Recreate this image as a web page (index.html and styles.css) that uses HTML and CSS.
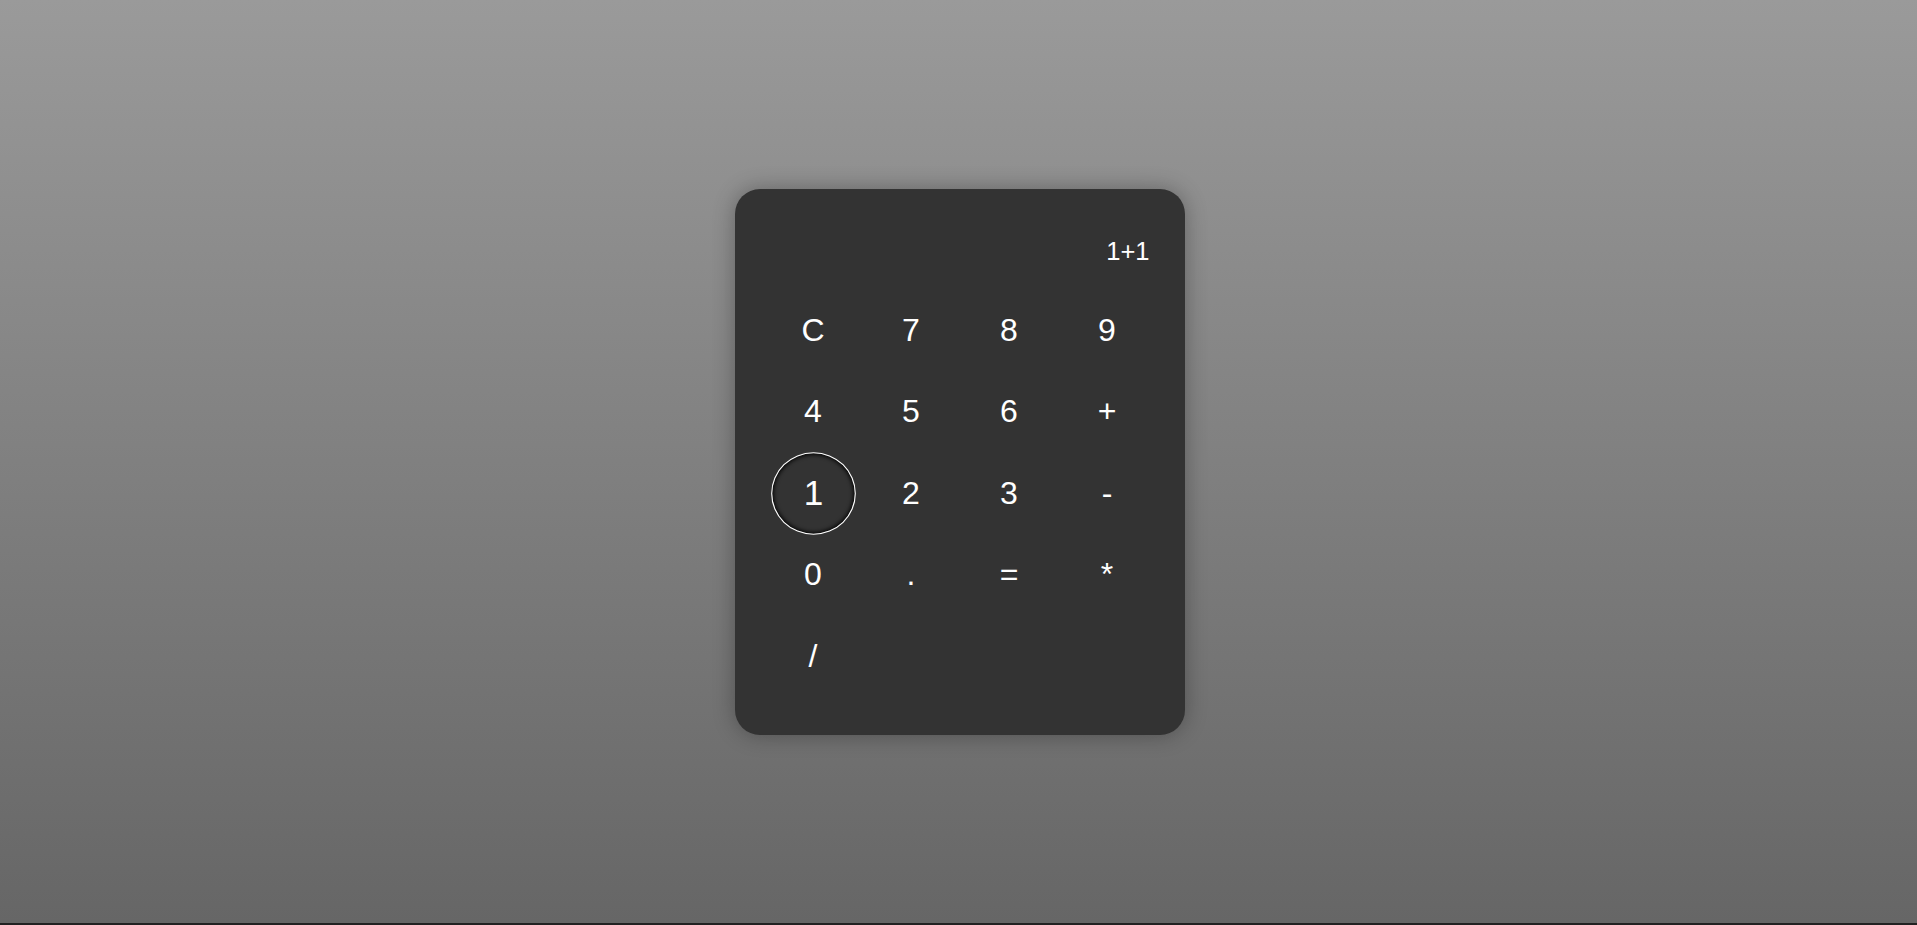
FILE: index.html
```html
<!DOCTYPE html>
<html lang="en">
<head>
<meta charset="utf-8">
<title>Calculator</title>
<link rel="stylesheet" href="styles.css">
</head>
<body>
<div class="calculator">
  <div class="display">1+1</div>
  <div class="keys">
    <button class="key">C</button>
    <button class="key">7</button>
    <button class="key">8</button>
    <button class="key">9</button>
    <button class="key">4</button>
    <button class="key">5</button>
    <button class="key">6</button>
    <button class="key">+</button>
    <button class="key key-active">1</button>
    <button class="key">2</button>
    <button class="key">3</button>
    <button class="key">-</button>
    <button class="key">0</button>
    <button class="key">.</button>
    <button class="key">=</button>
    <button class="key">*</button>
    <button class="key">/</button>
  </div>
</div>
</body>
</html>
```

FILE: styles.css
```css
html {
  background: #222222;
}

body {
  margin: 0;
  height: calc(100vh - 2px);
  background: linear-gradient(to bottom, #9a9a9a, #666666);
  display: flex;
  align-items: center;
  justify-content: center;
  padding-left: 3px;
  box-sizing: border-box;
  font-family: "Liberation Sans", Arial, sans-serif;
}

.calculator {
  width: 450px;
  box-sizing: border-box;
  padding: 40px 33.5px 41px;
  background: #333333;
  border-radius: 25px;
  box-shadow: 0 0 22px rgba(0, 0, 0, 0.3);
  color: #ffffff;
}

.display {
  height: 30px;
  line-height: 30px;
  padding-top: 7px;
  padding-right: 2px;
  margin-bottom: 27px;
  font-size: 25.5px;
  text-align: right;
}

.keys {
  display: grid;
  grid-template-columns: repeat(4, 77px);
  grid-auto-rows: 75px;
  column-gap: 21px;
  row-gap: 6.5px;
  margin: 0 6px;
}

.key {
  width: 77px;
  height: 75px;
  padding: 0;
  border: 1px solid transparent;
  border-radius: 50%;
  background: transparent;
  color: #ffffff;
  font-family: "Liberation Sans", Arial, sans-serif;
  font-size: 32px;
  display: flex;
  align-items: center;
  justify-content: center;
}

.key-active {
  transform: scale(1.1);
  border-color: #ffffff;
  box-shadow: inset 0 0 4px 1px #000000;
}
```
